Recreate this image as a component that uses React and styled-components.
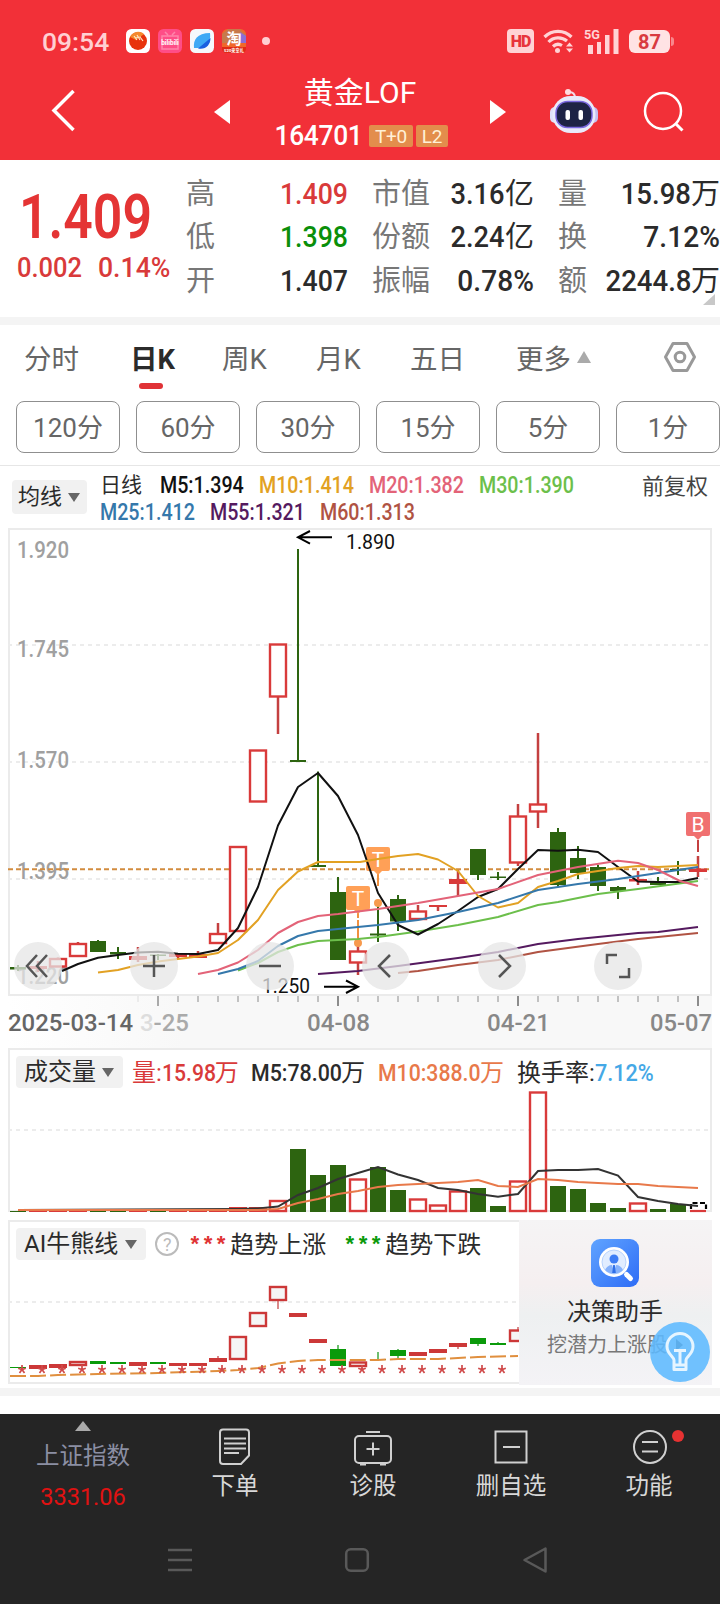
import React from 'react'
import styled, { createGlobalStyle } from 'styled-components'

const RED = '#d93a3a'
const GREEN = '#2d6410'

const cx = i => 18 + i * 20

// top, bottom of the body, then high and low of the wick
const candles = [
    ['g', 967, 969.5, 965, 971],
    ['r', 966, 969, 961, 972],
    ['h', 959, 966.5, 957.5, 967],
    ['h', 944, 956, 942, 956],
    ['g', 941, 952, 940, 952],
    ['g', 952, 954.5, 947, 959],
    ['r', 956, 960, 947, 962],
    ['g', 954.5, 956, 954, 960],
    ['r', 953.5, 957, 953, 959],
    ['r', 954, 958, 951, 958],
    ['h', 934, 943, 923, 943],
    ['h', 847, 931, 847, 931],
    ['h', 750.5, 801.5, 751, 801],
    ['h', 644.5, 696.5, 697, 734],
    ['g', 760, 762, 549, 761],
    ['g', 865, 867, 771.5, 866],
    ['g', 892, 960, 877, 960],
    ['h', 951.5, 962.5, 946, 975],
    ['g', 933.5, 935.5, 904, 942],
    ['g', 899, 921.5, 895, 931],
    ['h', 911.5, 919, 905, 919],
    ['r', 905, 907, 905, 911],
    ['r', 879, 884, 870, 896],
    ['g', 849, 875, 849, 880],
    ['g', 876.5, 878, 872, 880],
    ['h', 816.5, 862.5, 804, 866],
    ['h', 804.5, 811.5, 733, 828],
    ['g', 832, 885, 828, 887],
    ['g', 858, 873, 846, 879],
    ['g', 867, 886, 865, 891],
    ['g', 887, 891, 886, 899],
    ['r', 879, 881.5, 871, 885],
    ['g', 882, 885, 877, 885],
    ['g', 869, 870.5, 861, 875],
    ['r', 868.5, 872, 856, 877],
]

const maLines = [
    ['#551a5f', '318,974 358,971 398,966 458,958 498,952 538,944 578,939 638,933 658,932 698,927'],
    ['#b05343', '398,973 418,971 458,965 498,960 523,955 538,952 598,944 638,939 698,933'],
    ['#6cbf4b', '238,970.5 258,963 278,952 298,945 318,941 338,940 358,939 378,937 418,931.5 458,925 498,917 538,905 558,902 598,894 638,889 698,881'],
    ['#111', '62,971 78,964 98,957.7 118,955 138,952.5 158,951.7 178,953.7 198,954 218,950 238,928 258,887 278,825.5 298,787 318,773 338,796 358,835 378,893 398,925 418,934.5 438,924 458,911 478,897 498,889 518,869 538,850 558,850.7 578,849.7 598,852 618,867 638,881.5 658,882 678,882 698,878'],
    ['#e2a123', '98,972.5 118,970 138,965 158,961.5 178,959 198,956.5 218,953 238,940 258,920 278,890 298,871.5 318,862 360,862 378,859 398,856 418,854 438,859.5 458,871 478,896 498,907.5 518,903 538,887 558,881 578,874 598,871 618,868 638,866 658,867 698,865'],
    ['#3578ab', '218,974 238,969 258,961 278,946 298,936 318,931 338,929 378,925 418,920 458,912 498,903 538,890 578,884 618,879 658,873 698,867'],
    ['#e36378', '198,974 218,970 238,962.5 258,950 278,933 298,922 318,916 338,914 378,909 418,903 458,896 498,889 538,875 578,867 618,860.7 638,863 658,870 680,881 698,886'],
]

const volumes = [
    ['g', 1211], ['r', 1210.5], ['r', 1210.5], ['r', 1210.5], ['g', 1211], ['g', 1211], ['r', 1210.5], ['g', 1211],
    ['r', 1210.5], ['r', 1210.5], ['r', 1210.5], ['r', 1207], ['r', 1207], ['h', 1201], ['g', 1149], ['g', 1175],
    ['g', 1165], ['h', 1179.5], ['g', 1167], ['g', 1190], ['h', 1199.5], ['h', 1205.5], ['h', 1191.5], ['g', 1188],
    ['g', 1206], ['h', 1181.5], ['h', 1092.5], ['g', 1186], ['g', 1189], ['g', 1203], ['g', 1208], ['h', 1203.5],
    ['g', 1209], ['g', 1204],
]

const trend = [
    ['g', 1367, 1368], ['r', 1365, 1369], ['r', 1364, 1368], ['h', 1362, 1365], ['g', 1361, 1364], ['g', 1362, 1364],
    ['r', 1362, 1366], ['g', 1362, 1364], ['r', 1363, 1366], ['r', 1363, 1366], ['r', 1358, 1362, 1356, 1362],
    ['h', 1337, 1359], ['h', 1313, 1326], ['h', 1287, 1300, 1300, 1309], ['r', 1313, 1317], ['r', 1339, 1343],
    ['g', 1349, 1366, 1345, 1366], ['h', 1362.5, 1366], ['g', 1359, 1360, 1352, 1360], ['g', 1350, 1356, 1349, 1358],
    ['r', 1352, 1356], ['r', 1349, 1353], ['r', 1343, 1347, 1343, 1349], ['g', 1338, 1344, 1338, 1346],
    ['g', 1343, 1345, 1342, 1345], ['h', 1330.5, 1341, 1327, 1330],
]

const axisLabels = [
    ['1.920', 557.5], ['1.745', 657], ['1.570', 768], ['1.395', 878.7], ['1.220', 983.7],
]

function Bar({ x, kind, top, bottom, green = GREEN, red = RED, fill = '#fff' }) {
    if (kind === 'h') {
        return <rect x={x - 8} y={top} width="16" height={bottom - top} fill={fill} stroke={red} strokeWidth="2.400" />
    }
    return kind === 'g'
        ? <rect x={x - 8} y={top} width="16" height={bottom - top} fill={green} />
        : <rect x={x - 9} y={top} width="18" height={bottom - top} fill={red} />
}

function Marker({ x, y, letter, color }) {
    return (
        <g>
            <path d={`M${x - 5} ${y + 23}h10l-5 5z`} fill={color} />
            <rect x={x - 12} y={y} width="24" height="24" rx="2" fill={color} />
            <text x={x} y={y + 19.5} fontSize="21" fill="#fff" textAnchor="middle">{letter}</text>
        </g>
    )
}

function Digits({ x, y, w, color, children, size = 24, weight = 500 }) {
    return (
        <text x={x} y={y} fontSize={size} fontWeight={weight} fill={color} textLength={w} lengthAdjust="spacingAndGlyphs">
            {children}
        </text>
    )
}

function Ticks() {
    return candles.map((c, i) => {
        if (i < 6) return null
        const major = (i - 7) % 9 === 0
        return (
            <rect
                key={i}
                x={cx(i) - (major ? 1 : 0.5)}
                y="996"
                width={major ? 2 : 1}
                height={major ? 10 : 6}
                fill={i === 6 ? '#ddd' : i === 7 ? '#aaa' : '#8c8c8c'}
            />
        )
    })
}

function KChart() {
    return (
        <ChartSvg width="720" height="520" viewBox="0 528 720 520">
            <defs>
                <linearGradient id="axis" x1="0" x2="1" y1="0" y2="0">
                    <stop offset="0" stopColor="#fff" />
                    <stop offset="0.25" stopColor="#f8f8f8" />
                    <stop offset="1" stopColor="#f8f8f8" />
                </linearGradient>
            </defs>
            <rect x="8" y="996" width="704" height="52" fill="url(#axis)" />
            <rect x="9" y="529" width="702" height="466" fill="none" stroke="#ebebeb" strokeWidth="2" />
            {[645, 762, 879].map(y => (
                <path key={y} d={`M8 ${y}H710`} stroke="#ececec" strokeWidth="2" strokeDasharray="4 4" />
            ))}
            {axisLabels.map(([label, y]) => <Digits key={label} x={17} y={y} w={52} color="#a0a0a0">{label}</Digits>)}
            <path d="M8 869.3H710" stroke="#d28c3f" strokeWidth="2" strokeDasharray="5 3" />
            {candles.map(([kind, top, bottom, high, low], i) => (
                <g key={i}>
                    <path d={`M${cx(i)} ${high}V${low}`} stroke={kind === 'g' ? GREEN : '#c44040'} strokeWidth={kind === 'g' ? 2 : 2.5} />
                    <Bar x={cx(i)} kind={kind} top={top} bottom={bottom} />
                </g>
            ))}
            <path d="M378 874v12M358 912v6M358 920v20" stroke="#f0913f" strokeWidth="2" />
            <circle cx="378" cy="903" r="4" fill="#f79a4d" />
            <circle cx="358" cy="943" r="4" fill="#f79a4d" />
            <Marker x={378} y={847} letter="T" color="#ffa057" />
            <Marker x={358} y={886} letter="T" color="#ffa057" />
            {maLines.map(([color, points]) => (
                <polyline key={color} points={points} fill="none" stroke={color} strokeWidth="2" strokeLinejoin="round" />
            ))}
            <path d="M698 840v12" stroke="#c44040" strokeWidth="2" />
            <Marker x={698} y={812} letter="B" color="#f07070" />
            <path d="M332 537.3H299M310 531l-12 6.3 12 6.3" stroke="#000" strokeWidth="2" fill="none" />
            <Digits x={346} y={549} w={49} size={20} weight={400} color="#111">1.890</Digits>
            <path d="M324 986.7H357M346 980.5l12 6.2-12 6.3" stroke="#000" strokeWidth="2" fill="none" />
            <Digits x={262} y={993} w={48} size={20} weight={400} color="#111">1.250</Digits>
            <Ticks />
            <Digits x={8} y={1031} w={125} color="#666">2025-03-14</Digits>
            <Digits x={140} y={1031} w={49} color="#aaa"><tspan fill="#ddd">3</tspan>-25</Digits>
            <Digits x={307} y={1031} w={63} color="#888">04-08</Digits>
            <Digits x={487} y={1031} w={63} color="#888">04-21</Digits>
            <Digits x={650} y={1031} w={62} color="#888">05-07</Digits>
        </ChartSvg>
    )
}

function VolumeChart() {
    return (
        <ChartSvg width="700" height="120" viewBox="10 1090 700 120">
            <path d="M8 1130H710" stroke="#ececec" strokeWidth="2" strokeDasharray="4 4" />
            {volumes.map(([kind, top], i) => (
                <Bar key={i} x={cx(i)} kind={kind} top={top} bottom={kind === 'h' ? 1211 : 1212} />
            ))}
            <path d="M691 1209v-6h15v6" stroke="#000" strokeWidth="2.200" strokeDasharray="5 2.500" fill="none" />
            <path d="M690 1211H706" stroke={RED} strokeWidth="2.200" />
            <polyline
                points="18,1210 238,1209 258,1208.5 278,1206.5 298,1195 318,1188 338,1179 358,1173 378,1167 398,1174.5 418,1180 438,1188 458,1190 478,1194 498,1196.7 518,1194 538,1171 558,1170 578,1170 598,1169 618,1175.5 638,1197 658,1201 678,1204 698,1206"
                fill="none" stroke="#333" strokeWidth="2"
            />
            <polyline
                points="18,1210 258,1210 278,1209 298,1203 318,1199 338,1194 358,1191 378,1187 398,1185 418,1184 438,1183 458,1182 478,1180 498,1186 518,1187 538,1179 558,1180 578,1182 618,1184 638,1184 658,1186 698,1188"
                fill="none" stroke="#e8794a" strokeWidth="2"
            />
        </ChartSvg>
    )
}

function TrendChart() {
    return (
        <ChartSvg width="700" height="120" viewBox="10 1262 700 120">
            <path d="M8 1302H519" stroke="#ececec" strokeWidth="2" strokeDasharray="4 4" />
            {trend.map(([kind, top, bottom, high, low], i) => (
                <g key={i}>
                    {high && <path d={`M${cx(i)} ${high}V${low}`} stroke={kind === 'g' ? '#6fbf6f' : '#d98a8a'} strokeWidth="2" />}
                    <Bar x={cx(i)} kind={kind} top={top} bottom={bottom} green="#0a9a0a" red="#cc3838" fill="#f5f5f5" />
                </g>
            ))}
            <polyline
                points="10,1376 38,1376 58,1375 98,1374 158,1373 218,1371 238,1370 258,1368 278,1363.5 298,1361 318,1360 378,1360 398,1359 438,1359 458,1358 478,1357 498,1356.5 518,1356"
                fill="none" stroke="#e08f3e" strokeWidth="2" strokeDasharray="16 4.04"
            />
            {trend.slice(0, 25).map((t, i) => (
                <path
                    key={i}
                    d={`M${22 + i * 20} 1365v4.5m-3.8 -1.2l3.8 1.2l3.8 -1.2m-3.8 1.2l-2.5 3.4m2.5 -3.4l2.5 3.4`}
                    stroke="#d04a4a" strokeWidth="1.7" fill="none"
                />
            ))}
        </ChartSvg>
    )
}

function Wifi() {
    return (
        <svg width="32" height="26" viewBox="0 0 32 26" fill="none" stroke="#ffd3d5" strokeWidth="3.2">
            <path d="M1.500 9a19 19 0 0 1 27 0M5.500 14a13.500 13.500 0 0 1 18.500 -1M10 18.500a7.500 7.500 0 0 1 9 -1" />
            <circle cx="14.500" cy="22.500" r="2.500" fill="#ffd3d5" stroke="none" />
            <path d="M23 18.500l3.500-4 3.500 4zM23 20.500l3.500 4 3.500-4z" fill="#ffd3d5" stroke="none" />
        </svg>
    )
}

function Robot() {
    return (
        <svg width="50" height="48" viewBox="0 0 50 48">
            <path d="M25 10c0-4-2-6-6-6" stroke="#f3d9e6" strokeWidth="2" fill="none" />
            <circle cx="18" cy="4" r="3" fill="#ffdce0" />
            <rect x="0" y="19" width="10" height="16" rx="5" fill="#dfe0f8" />
            <rect x="38" y="19" width="10" height="16" rx="5" fill="#c3bff0" />
            <rect x="2.500" y="8" width="43" height="37" rx="18" fill="#e9eafa" />
            <rect x="6" y="13.500" width="36" height="26" rx="11.500" fill="#1d2345" stroke="#7a68e0" strokeWidth="1.500" />
            <rect x="15.500" y="22" width="4.500" height="10" rx="2" fill="#fff" />
            <rect x="28.500" y="22" width="4.500" height="10" rx="2" fill="#fff" />
        </svg>
    )
}

function StatusBar() {
    return (
        <Status>
            <Clock>09:54</Clock>
            <AppIcon viewBox="0 0 24 24">
                <rect width="24" height="24" rx="5.500" fill="#fff" />
                <circle cx="12" cy="12" r="9" fill="#e8330b" />
                <path d="M4 8a9 9 0 0 1 14-3l-8 6z" fill="#f58a2e" />
                <path d="M8 7l3 4M11 6l3 5M14 8l3 4M9 9l6-1" stroke="#ffe9c8" strokeWidth="1.200" />
            </AppIcon>
            <AppIcon viewBox="0 0 24 24">
                <rect width="24" height="24" rx="5.500" fill="#ff4d87" />
                <path d="M7 3l3 3M17 3l-3 3M4 7h16v13H4z" stroke="#ff84ab" strokeWidth="1.500" fill="none" />
                <text x="12" y="16" fontSize="6.500" fontWeight="700" fill="#fff" textAnchor="middle">bilibili</text>
            </AppIcon>
            <AppIcon viewBox="0 0 24 24">
                <rect width="24" height="24" rx="5.500" fill="#f5f8fc" />
                <path d="M4 19C3 11 7 4 20 4c1 8-2 16-16 15z" fill="#3fa9f5" />
                <path d="M8 19.500L20.500 9c0 7-5 12-12.500 10.500z" fill="#1a5fe0" />
            </AppIcon>
            <AppIcon viewBox="0 0 24 24">
                <rect width="24" height="24" rx="5.500" fill="#f0672a" />
                <path d="M0 5l6-5h12l6 6v8H0z" fill="#c77a4b" />
                <path d="M18 3l6 4v7h-6z" fill="#8a6fd6" />
                <path d="M0 18h24v2c0 2-2 4-4 4H4c-2 0-4-2-4-4z" fill="#e02a14" />
                <text x="12" y="15" fontSize="15" fontWeight="700" fill="#fff" textAnchor="middle">淘</text>
                <text x="12" y="22.500" fontSize="4.200" fontWeight="700" fill="#fff" textAnchor="middle">520来拿礼</text>
            </AppIcon>
            <Dot />
            <StatusRight>
                <HdTag>HD</HdTag>
                <Wifi />
                <svg width="36" height="26" viewBox="0 0 36 26" fill="#ffd3d5">
                    <text x="0" y="10.500" fontSize="13" fontWeight="700" textLength="16" lengthAdjust="spacingAndGlyphs">5G</text>
                    <path d="M4 17h5v9H4zM13 14h4v12h-4zM21 7h4.500v19H21zM29.500 1h5v25h-5z" />
                </svg>
                <Battery>87</Battery>
            </StatusRight>
        </Status>
    )
}

function Header() {
    return (
        <HeaderRow>
            <svg width="24" height="44" viewBox="0 0 24 44"><path d="M22.500 3L3 22.500l19.500 19.500" fill="none" stroke="#fff" strokeWidth="3.500" /></svg>
            <Prev width="16" height="24" viewBox="0 0 16 24"><path d="M16 0v24L0 12z" fill="#fff" /></Prev>
            <TitleBlock>
                <Title>黄金LOF</Title>
                <Code>
                    <Num $k={0.94} $w={95}>164701</Num>
                    <Tag $w={44}>T+0</Tag>
                    <Tag $w={32}>L2</Tag>
                </Code>
            </TitleBlock>
            <Next width="16" height="24" viewBox="0 0 16 24"><path d="M0 0v24l16-12z" fill="#fff" /></Next>
            <Robot />
            <Search width="42" height="42" viewBox="0 0 42 42" fill="none" stroke="#fff" strokeWidth="2.500">
                <circle cx="20" cy="20" r="18" /><path d="M32.500 32.500l7 7" strokeWidth="3" />
            </Search>
        </HeaderRow>
    )
}

const quoteRows = [
    ['高', '1.409', RED, '市值', '3.16', '亿', '量', '15.98', '万'],
    ['低', '1.398', '#0a8f0a', '份额', '2.24', '亿', '换', '7.12%', ''],
    ['开', '1.407', '#2b2b2b', '振幅', '0.78%', '', '额', '2244.8', '万'],
]

function Quote() {
    return (
        <QuotePanel>
            <PriceBlock>
                <Price><Num $k={0.835}>1.409</Num></Price>
                <Change><Num $k={0.91} $w={81}>0.002</Num><Num $k={0.95}>0.14%</Num></Change>
            </PriceBlock>
            <QuoteGrid>
                {quoteRows.map(([a, av, color, b, bv, bu, c, cv, cu]) => (
                    <React.Fragment key={a}>
                        <Label>{a}</Label>
                        <Value $color={color}><Num $k={0.92} $end>{av}</Num></Value>
                        <Label $pad={24}>{b}</Label>
                        <Value><Num $k={bu ? 0.94 : 0.97} $end>{bv}</Num>{bu}</Value>
                        <Label $pad={24}>{c}</Label>
                        <Value><Num $k={cu ? 0.95 : 0.97} $end>{cv}</Num>{cu}</Value>
                    </React.Fragment>
                ))}
            </QuoteGrid>
            <Corner />
        </QuotePanel>
    )
}

const floatIcons = [
    'M23 13L13 24l10 11M33 13L23 24l10 11',
    'M13 24h22M24 13v22',
    'M13 24h22',
    'M28 13L17 24l11 11',
    'M21 13l11 11-11 11',
    'M13 22v-9h10M35 26v9H25',
]

function App() {
    return (
        <Page>
            <GlobalStyle />
            <Top>
                <StatusBar />
                <Header />
            </Top>
            <Quote />
            <Strip />
            <Tabs>
                <Tab $w={106}>分时</Tab>
                <Tab $w={92} $active>日K</Tab>
                <Tab $w={94}>周K</Tab>
                <Tab $w={94}>月K</Tab>
                <Tab $w={106}>五日</Tab>
                <Tab>更多<Caret $up $size={15} /></Tab>
                <Settings width="34" height="34" viewBox="0 0 34 34" fill="none" stroke="#999" strokeWidth="3">
                    <path d="M10 3.500h14l7.500 13.500-7.500 13.500H10L2.500 17z" strokeLinejoin="round" />
                    <circle cx="17" cy="17" r="4.800" />
                </Settings>
            </Tabs>
            <Periods>
                {['120分', '60分', '30分', '15分', '5分', '1分'].map(p => <Period key={p}>{p}</Period>)}
            </Periods>
            <Legend>
                <DropButton $h={34} $size={22}>均线<Caret $size={13} /></DropButton>
                <LegendLines>
                    <LegendLine>
                        <LegendName>日线</LegendName>
                        <Num $k={0.855} $w={99} $color="#111">M5:1.394</Num>
                        <Num $k={0.855} $w={110} $color="#e2a123">M10:1.414</Num>
                        <Num $k={0.855} $w={110} $color="#e36378">M20:1.382</Num>
                        <Num $k={0.855} $color="#6cbf4b">M30:1.390</Num>
                    </LegendLine>
                    <LegendLine>
                        <Num $k={0.855} $w={110} $color="#3578ab">M25:1.412</Num>
                        <Num $k={0.855} $w={110} $color="#551a5f">M55:1.321</Num>
                        <Num $k={0.855} $color="#b05343">M60:1.313</Num>
                    </LegendLine>
                </LegendLines>
                <Adjust>前复权</Adjust>
            </Legend>
            <ChartWrap>
                <KChart />
                <FloatBar>
                    {floatIcons.map(d => (
                        <FloatButton key={d}>
                            <svg width="48" height="48" viewBox="0 0 48 48"><path d={d} fill="none" stroke="#555" strokeWidth="2.500" /></svg>
                        </FloatButton>
                    ))}
                </FloatBar>
            </ChartWrap>
            <Panel>
                <PanelHeader>
                    <DropButton $h={32} $size={24}>成交量<Caret $size={13} /></DropButton>
                    <Stat $w={119} $color={RED}>量:<Num $k={0.88} $w={53}>15.98</Num>万</Stat>
                    <Stat $w={127}><Num $k={0.89} $w={90}>M5:78.00</Num>万</Stat>
                    <Stat $w={139} $color="#e8794a"><Num $k={0.885} $w={102}>M10:388.0</Num>万</Stat>
                    <Stat $w={78}>换手率:</Stat>
                    <Stat $color="#45a8e6"><Num $k={0.9}>7.12%</Num></Stat>
                </PanelHeader>
                <VolumeChart />
            </Panel>
            <Panel>
                <PanelHeader>
                    <DropButton $h={32} $size={24} $wide>AI牛熊线<Caret $size={13} /></DropButton>
                    <Help>?</Help>
                    <Stars $color="#e03434">***</Stars>
                    <Stat $w={113}>趋势上涨</Stat>
                    <Stars $color="#0a9a0a">***</Stars>
                    <Stat>趋势下跌</Stat>
                </PanelHeader>
                <TrendChart />
                <Promo>
                    <svg width="48" height="48" viewBox="0 0 48 48">
                        <defs>
                            <linearGradient id="promo" x1="0" y1="0" x2="1" y2="1">
                                <stop offset="0" stopColor="#60a4ff" /><stop offset="1" stopColor="#2e6cf6" />
                            </linearGradient>
                        </defs>
                        <rect width="48" height="48" rx="9" fill="url(#promo)" />
                        <circle cx="23" cy="23" r="15" fill="#fff" />
                        <circle cx="23" cy="23" r="12" fill="#e1edff" stroke="#b9d4fd" />
                        <circle cx="23" cy="20" r="4.500" fill="#3d7df5" />
                        <path d="M14 31c1-3 4-5 7-5l2 7 2-7c3 0 6 2 7 5-5 5-13 5-18 0z" fill="#86b2fb" />
                        <path d="M22.200 26h1.600l1 8h-3.600z" fill="#2f6fe8" />
                        <path d="M35.500 35.500l4 4" stroke="#fff" strokeWidth="5" strokeLinecap="round" />
                    </svg>
                    <PromoTitle>决策助手</PromoTitle>
                    <PromoSub>挖潜力上涨股<i /></PromoSub>
                </Promo>
                <Bulb>
                    <svg width="60" height="60" viewBox="0 0 60 60" fill="none" stroke="#e6f5ff" strokeWidth="3" strokeLinejoin="round">
                        <path d="M24 38c0-3-7-6-7-13.500a13 13 0 0 1 26 0C43 32 36 35 36 38v9.500H24zM24 43h12" />
                        <path d="M24 28.500h12M30 28.500V42" />
                    </svg>
                </Bulb>
            </Panel>
            <Strip />
            <BottomBar>
                <NavRow>
                    <IndexItem>
                        <Caret $up $size={17} />
                        <IndexName>上证指数</IndexName>
                        <IndexValue>3331.06</IndexValue>
                    </IndexItem>
                    <NavItem>
                        <NavIcon viewBox="0 0 40 40">
                            <path d="M8 2.500h23a3 3 0 0 1 3 3v23L26 37H8a3 3 0 0 1-3-3V5.500a3 3 0 0 1 3-3z" />
                            <path d="M9 11.500h22M9 16.500h22M9 21.500h22M9 26h15" />
                        </NavIcon>
                        下单
                    </NavItem>
                    <NavItem>
                        <NavIcon viewBox="0 0 40 40">
                            <rect x="2" y="9" width="36" height="27" rx="4" />
                            <path d="M13 5h14M20 15.500v13M13.500 22h13M7 37.500h6M27 37.500h6" />
                        </NavIcon>
                        诊股
                    </NavItem>
                    <NavItem>
                        <NavIcon viewBox="0 0 40 40">
                            <path d="M4.500 4.500h31v31h-31zM12 20h17" />
                        </NavIcon>
                        删自选
                    </NavItem>
                    <NavItem>
                        <NavIcon viewBox="0 0 40 40">
                            <circle cx="21" cy="20" r="16" />
                            <path d="M13 15h16M13 24.500h16" />
                        </NavIcon>
                        功能
                        <Badge />
                    </NavItem>
                </NavRow>
                <SystemRow>
                    <svg width="24" height="26" viewBox="0 0 24 26" stroke="#595959" strokeWidth="2.500"><path d="M0 3h24M0 13h24M0 23h24" /></svg>
                    <svg width="26" height="26" viewBox="0 0 26 26"><rect x="2.200" y="2.200" width="21.600" height="21.600" rx="4.500" fill="none" stroke="#595959" strokeWidth="2.500" /></svg>
                    <svg width="26" height="28" viewBox="0 0 26 28"><path d="M23.500 2.500v23L2.500 14z" fill="none" stroke="#595959" strokeWidth="2.500" strokeLinejoin="round" /></svg>
                </SystemRow>
            </BottomBar>
        </Page>
    )
}

export default App

const GlobalStyle = createGlobalStyle`
    * {
        box-sizing: border-box;
    }
    body {
        margin: 0;
        background: #fff;
        font-family: Roboto, 'Noto Sans CJK SC', sans-serif;
    }
    svg {
        display: block;
        flex: none;
    }
`

const Page = styled.div`
    width: 720px;
    height: 1604px;
    display: flex;
    flex-direction: column;
    overflow: hidden;
    color: #2b2b2b;
`

const Num = styled.span`
    display: inline-block;
    flex: none;
    white-space: nowrap;
    color: ${p => p.$color || 'inherit'};
    font-weight: 500;
    transform: scaleX(${p => p.$k});
    transform-origin: ${p => (p.$end ? 'right' : 'left')};
    ${p => p.$w && `
        width: ${p.$w / p.$k}px;
        margin-right: ${p.$w - p.$w / p.$k}px;
    `}
`

const Top = styled.header`
    height: 160px;
    background: #f23038;
`

const Status = styled.div`
    display: flex;
    align-items: center;
    height: 80px;
    padding: 2px 50px 0 42px;
    color: #ffcfd2;
`

const Clock = styled.span`
    width: 84px;
    font-size: 26.500px;
    font-weight: 500;
`

const AppIcon = styled.svg`
    width: 24px;
    height: 24px;
    margin-right: 8px;
`

const Dot = styled.span`
    width: 8px;
    height: 8px;
    margin-left: 8px;
    border-radius: 50%;
    background: #ffcfd2;
`

const StatusRight = styled.div`
    display: flex;
    align-items: center;
    margin-left: auto;
    gap: 9px;
`

const HdTag = styled.span`
    width: 27px;
    height: 24px;
    border-radius: 4px;
    background: #ffd3d5;
    color: #e8343b;
    font-size: 16px;
    font-weight: 900;
    line-height: 25px;
    letter-spacing: -1px;
    text-align: center;
`

const Battery = styled.span`
    position: relative;
    width: 41px;
    height: 23px;
    border-radius: 6px;
    background: #ffe3e4;
    color: #d93a40;
    font-size: 20px;
    font-weight: 700;
    line-height: 24px;
    text-align: center;

    &::after {
        content: '';
        position: absolute;
        right: -4px;
        top: 7px;
        width: 3px;
        height: 9px;
        border-radius: 0 3px 3px 0;
        background: #f8878c;
    }
`

const HeaderRow = styled.div`
    display: flex;
    align-items: flex-start;
    height: 80px;
    padding: 8px 0 0 51px;
`

const Prev = styled.svg`
    margin: 12px 0 0 139px;
`

const TitleBlock = styled.div`
    width: 260px;
    margin-top: -13px;
    text-align: center;
`

const Title = styled.h1`
    margin: 0;
    color: #fff;
    font-size: 30px;
    font-weight: 400;
    line-height: 36px;
`

const Code = styled.div`
    display: flex;
    align-items: center;
    gap: 3px;
    margin-top: 7px;
    padding-left: 41px;
    color: #fff;
    font-size: 28px;
    line-height: 36px;
    letter-spacing: -0.300px;
`

const Tag = styled.span`
    width: ${p => p.$w}px;
    height: 22px;
    border-radius: 2px;
    background: #e38d4c;
    color: #fff0d6;
    font-size: 19px;
    line-height: 23px;
    text-align: center;
`

const Next = styled.svg`
    margin: 12px 44px 0 0;
`

const Search = styled.svg`
    margin: 3px 0 0 43px;
`

const QuotePanel = styled.section`
    position: relative;
    display: flex;
    height: 157px;
    padding-top: 13px;
`

const PriceBlock = styled.div`
    width: 186px;
    padding: 9px 0 0 17px;
    color: ${RED};
`

const Price = styled.div`
    height: 66px;
    padding-left: 2px;
    color: #e43434;
    font-size: 62px;
    line-height: 70px;

    span {
        font-weight: 600;
    }
`

const Change = styled.div`
    display: flex;
    font-size: 28px;
    line-height: 42px;
    margin-top: -1px;
`

const QuoteGrid = styled.div`
    display: grid;
    width: 534px;
    grid-template-columns: 40px 122px 84px 102px 54px 132px;
    grid-template-rows: repeat(3, 43.300px);
    align-items: center;
    font-size: 29px;
    line-height: 43px;
`

const Label = styled.span`
    padding-left: ${p => p.$pad || 0}px;
    white-space: nowrap;
    color: #777;
`

const Value = styled.span`
    display: flex;
    justify-content: flex-end;
    color: ${p => p.$color || '#2b2b2b'};
    font-size: 29px;
`

const Corner = styled.i`
    position: absolute;
    right: 5px;
    bottom: 12px;
    border-left: 12px solid transparent;
    border-bottom: 11px solid #c8c8c8;
`

const Strip = styled.div`
    flex: none;
    height: 8px;
    background: #f4f4f4;
`

const Tabs = styled.nav`
    display: flex;
    height: 76px;
    padding-left: 24px;
`

const Tab = styled.span`
    position: relative;
    display: flex;
    align-items: center;
    width: ${p => (p.$w ? `${p.$w}px` : 'auto')};
    height: 64px;
    color: ${p => (p.$active ? '#2b2b2b' : '#666')};
    font-size: 27.500px;
    font-weight: ${p => (p.$active ? 700 : 400)};
    gap: 6px;

    ${p => p.$active && `
        gap: 0;
        &::after {
            content: '';
            position: absolute;
            left: 9px;
            top: 58px;
            width: 24px;
            height: 6px;
            border-radius: 3px;
            background: #e03236;
        }
    `}
`

const Caret = styled.i`
    flex: none;
    border-left: ${p => p.$size / 2}px solid transparent;
    border-right: ${p => p.$size / 2}px solid transparent;
    ${p => (p.$up
        ? 'border-bottom: 12px solid #aaa;'
        : 'border-top: 9px solid #666;')}
`

const Settings = styled.svg`
    margin: 15px 23px 0 auto;
`

const Periods = styled.div`
    display: flex;
    flex: none;
    gap: 16px;
    height: 65px;
    padding-left: 16px;
    border-bottom: 1px solid #e6e6e6;
`

const Period = styled.button`
    flex: none;
    width: 104px;
    height: 52px;
    padding: 0;
    border: 1px solid #8f8f8f;
    border-radius: 8px;
    background: #fff;
    color: #666;
    font-family: inherit;
    font-size: 26px;
    line-height: 52px;
`

const Legend = styled.div`
    display: flex;
    flex: none;
    align-items: flex-start;
    height: 62px;
    padding: 0 12px;

    button {
        margin-top: 14px;
    }
`

const DropButton = styled.button`
    display: flex;
    align-items: center;
    flex: none;
    gap: ${p => (p.$wide ? 7 : 6)}px;
    height: ${p => p.$h}px;
    padding: 0 ${p => (p.$h === 34 ? 7 : 9)}px 0 ${p => (p.$h === 34 ? 6 : 8)}px;
    border: 0;
    border-radius: 4px;
    background: #f1f1f1;
    color: #2b2b2b;
    font-family: inherit;
    font-size: ${p => p.$size}px;
    line-height: ${p => p.$h + 2}px;
`

const LegendLines = styled.div`
    margin: 6px 0 0 13px;
    font-size: 23px;
`

const LegendLine = styled.div`
    display: flex;
    height: 27px;
    line-height: 27px;
`

const LegendName = styled.span`
    width: 60px;
    font-size: 21px;
`

const Adjust = styled.span`
    margin: 6px 0 0 auto;
    color: #444;
    font-size: 22px;
    line-height: 29px;
`

const ChartWrap = styled.div`
    position: relative;
    height: 520px;
`

const ChartSvg = styled.svg`
    overflow: visible;
`

const FloatBar = styled.div`
    position: absolute;
    left: 14px;
    top: 414px;
    display: flex;
    gap: 68px;
`

const FloatButton = styled.span`
    width: 48px;
    height: 48px;
    border-radius: 50%;
    background: rgba(230, 230, 230, 0.75);
`

const Panel = styled.section`
    position: relative;
    flex: none;
    width: 704px;
    height: 164px;
    margin: 0 8px 8px;
    border: 2px solid #ebebeb;

    & + & {
        margin-bottom: 4px;
    }
`

const PanelHeader = styled.div`
    display: flex;
    height: 40px;
    padding: 6px 0 0 6px;
    font-size: 24px;
    line-height: 34px;

    button + span {
        margin-left: 9px;
    }
`

const Stat = styled.span`
    display: flex;
    flex: none;
    width: ${p => (p.$w ? `${p.$w}px` : 'auto')};
    color: ${p => p.$color || '#2b2b2b'};
    white-space: nowrap;
`

const Help = styled.span`
    width: 24px;
    height: 24px;
    margin: 4px 9px 0 0;
    border: 2px solid #bbb;
    border-radius: 50%;
    color: #bbb;
    font-size: 18px;
    line-height: 21px;
    text-align: center;
`

const Stars = styled.span`
    width: 42px;
    color: ${p => p.$color};
    font-family: 'Liberation Mono', monospace;
    font-size: 22px;
    font-weight: 700;
    line-height: 37px;
`

const Promo = styled.aside`
    position: absolute;
    right: -2px;
    top: -2px;
    display: flex;
    flex-direction: column;
    align-items: center;
    width: 193px;
    height: 165px;
    padding: 19px 1px 0 0;
    background: linear-gradient(#f5f4f5, #f5eff0 38%, #eef0f1 58%, #f4f3f6);
`

const PromoTitle = styled.div`
    margin-top: 9px;
    font-size: 24px;
    line-height: 32px;
`

const PromoSub = styled.div`
    display: flex;
    align-items: center;
    color: #777;
    font-size: 20px;
    line-height: 34px;

    i {
        margin-left: 9px;
        border-left: 7px solid #555;
        border-top: 6px solid transparent;
        border-bottom: 6px solid transparent;
    }
`

const Bulb = styled.span`
    position: absolute;
    right: 0;
    bottom: 0;
    width: 60px;
    height: 60px;
    border-radius: 50%;
    background: rgba(93, 186, 255, 0.88);
`

const BottomBar = styled.footer`
    flex: none;
    height: 190px;
    margin-top: 18px;
    background: #252525;
`

const NavRow = styled.div`
    display: flex;
    height: 116px;
`

const IndexItem = styled.div`
    display: flex;
    flex-direction: column;
    align-items: center;
    width: 166px;
    padding-top: 7px;

    i {
        border-bottom-width: 10px;
    }
`

const IndexName = styled.span`
    margin-top: 8px;
    color: #8b8fa3;
    font-size: 23.500px;
    line-height: 34px;
`

const IndexValue = styled.span`
    margin-top: 8px;
    color: #e01212;
    font-size: 23.500px;
    line-height: 32px;
`

const NavItem = styled.div`
    position: relative;
    display: flex;
    flex-direction: column;
    align-items: center;
    width: 138px;
    padding-top: 13px;
    color: #d8d8d8;
    font-size: 23.500px;
    line-height: 39px;
`

const NavIcon = styled.svg`
    width: 40px;
    height: 40px;
    fill: none;
    stroke: #d0d0d0;
    stroke-width: 2;
`

const Badge = styled.i`
    position: absolute;
    left: 92px;
    top: 16px;
    width: 12px;
    height: 12px;
    border-radius: 50%;
    background: #e63232;
`

const SystemRow = styled.div`
    display: flex;
    align-items: center;
    justify-content: space-between;
    height: 60px;
    padding: 0 172px 0 168px;
`
